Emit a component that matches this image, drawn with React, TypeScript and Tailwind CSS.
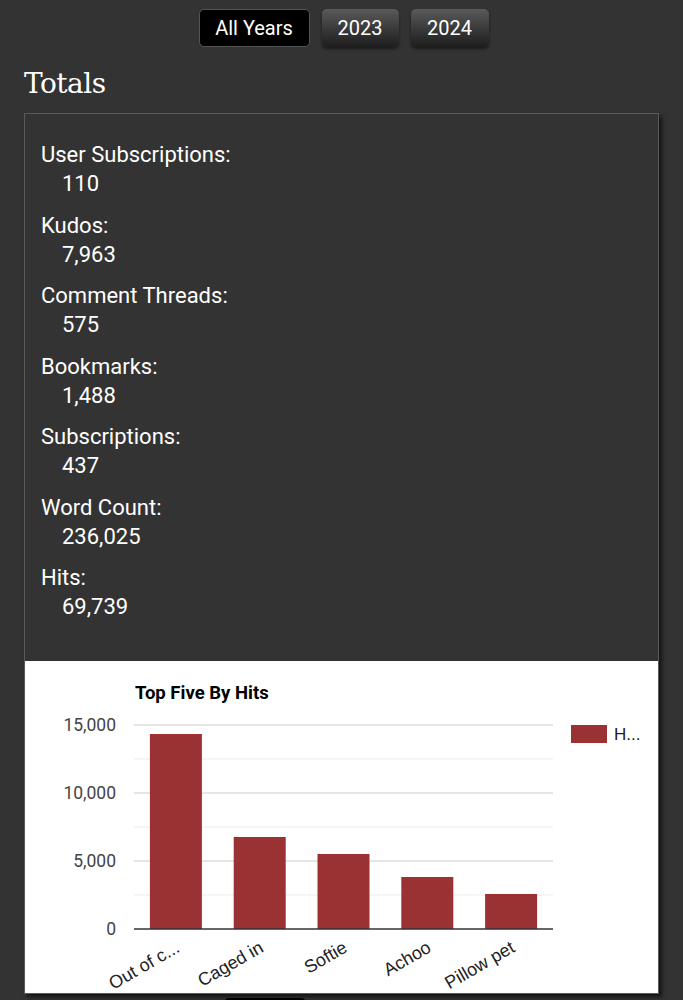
const stats = [
  { label: 'User Subscriptions:', value: '110' },
  { label: 'Kudos:', value: '7,963' },
  { label: 'Comment Threads:', value: '575' },
  { label: 'Bookmarks:', value: '1,488' },
  { label: 'Subscriptions:', value: '437' },
  { label: 'Word Count:', value: '236,025' },
  { label: 'Hits:', value: '69,739' },
];

const works = [
  { name: 'Out of c...', hits: 14338 },
  { name: 'Caged in', hits: 6765 },
  { name: 'Softie', hits: 5515 },
  { name: 'Achoo', hits: 3824 },
  { name: 'Pillow pet', hits: 2574 },
];

// chart coordinates are relative to the white panel (origin at page x=24, y=661)
const plotLeft = 109;
const plotRight = 528;
const plotBottom = 268;
const plotHeight = 204;
const maxValue = 15000;

function HitsChart() {
  const y = (v: number) => plotBottom - (v / maxValue) * plotHeight;
  const slot = (plotRight - plotLeft) / works.length;
  const barW = 52;

  return (
    <svg width="636" height="332" viewBox="0 0 636 332" className="block">
      <text x="110" y="38" fontFamily="Roboto, sans-serif" fontWeight="700" fontSize="18.5" fill="#000">
        Top Five By Hits
      </text>
      {[2500, 7500, 12500].map((v) => (
        <line key={v} x1={plotLeft} x2={plotRight} y1={y(v)} y2={y(v)} stroke="#ebebeb" strokeWidth="1" />
      ))}
      {[5000, 10000, 15000].map((v) => (
        <line key={v} x1={plotLeft} x2={plotRight} y1={y(v)} y2={y(v)} stroke="#cccccc" strokeWidth="1" />
      ))}
      {[0, 5000, 10000, 15000].map((v) => (
        <text
          key={v}
          x="91"
          y={y(v) + 6}
          textAnchor="end"
          fontFamily="Roboto, sans-serif"
          fontSize="17.5"
          fill="#444"
        >
          {v.toLocaleString('en-US')}
        </text>
      ))}
      {works.map((w, i) => {
        const cx = plotLeft + slot * i + slot / 2;
        return (
          <g key={w.name}>
            <rect x={cx - barW / 2} y={y(w.hits)} width={barW} height={plotBottom - y(w.hits)} fill="#9a3234" />
            <text
              x={cx + 5}
              y={plotBottom + 22}
              textAnchor="end"
              fontFamily="'Liberation Sans', Arial, sans-serif"
              fontSize="18"
              fill="#222"
              transform={`rotate(-30 ${cx + 5} ${plotBottom + 22})`}
            >
              {w.name}
            </text>
          </g>
        );
      })}
      <line x1={plotLeft} x2={plotRight} y1={plotBottom} y2={plotBottom} stroke="#333" strokeWidth="1.5" />
      <rect x="546" y="64" width="36" height="18" fill="#9a3234" />
      <text x="589" y="79" fontFamily="'Liberation Sans', Arial, sans-serif" fontSize="17" fill="#222">
        H...
      </text>
    </svg>
  );
}

export default function App() {
  return (
    <div className="min-h-[1000px] overflow-hidden bg-[#333333] font-['Roboto',sans-serif] text-white">
      <div className="flex justify-center gap-3 pt-[9px] pl-1">
        <button className="h-[38px] w-[111px] rounded-[5px] border border-[#555] bg-black text-[20px] text-white">
          All Years
        </button>
        <button className="h-[38px] w-[77px] rounded-[5px] bg-gradient-to-b from-[#5a5a5a] to-[#1e1e1e] text-[20px] text-white shadow-[0_2px_3px_rgba(0,0,0,0.5)]">
          2023
        </button>
        <button className="h-[38px] w-[78px] rounded-[5px] bg-gradient-to-b from-[#5a5a5a] to-[#1e1e1e] text-[20px] text-white shadow-[0_2px_3px_rgba(0,0,0,0.5)]">
          2024
        </button>
      </div>

      <h2 className="mt-[19px] pl-6 font-['DejaVu_Serif',serif] text-[28px] leading-[36px] tracking-[-0.5px] text-white">
        Totals
      </h2>

      <div className="mx-6 mt-[11px] border border-[#5a5a5a] shadow-[3px_3px_4px_rgba(0,0,0,0.6)]">
        <div className="flex flex-col gap-[12.5px] px-4 pt-[26px] pb-[40px]">
          {stats.map((s) => (
            <div key={s.label} className="text-[22px] leading-[29px]">
              <div>{s.label}</div>
              <div className="pl-[21px]">{s.value}</div>
            </div>
          ))}
        </div>
        <div className="bg-white">
          <HitsChart />
        </div>
      </div>

      <div className="mt-1 flex justify-center pr-[154px]">
        <div className="h-[38px] w-[82px] rounded-[5px] bg-black" />
      </div>
    </div>
  );
}
